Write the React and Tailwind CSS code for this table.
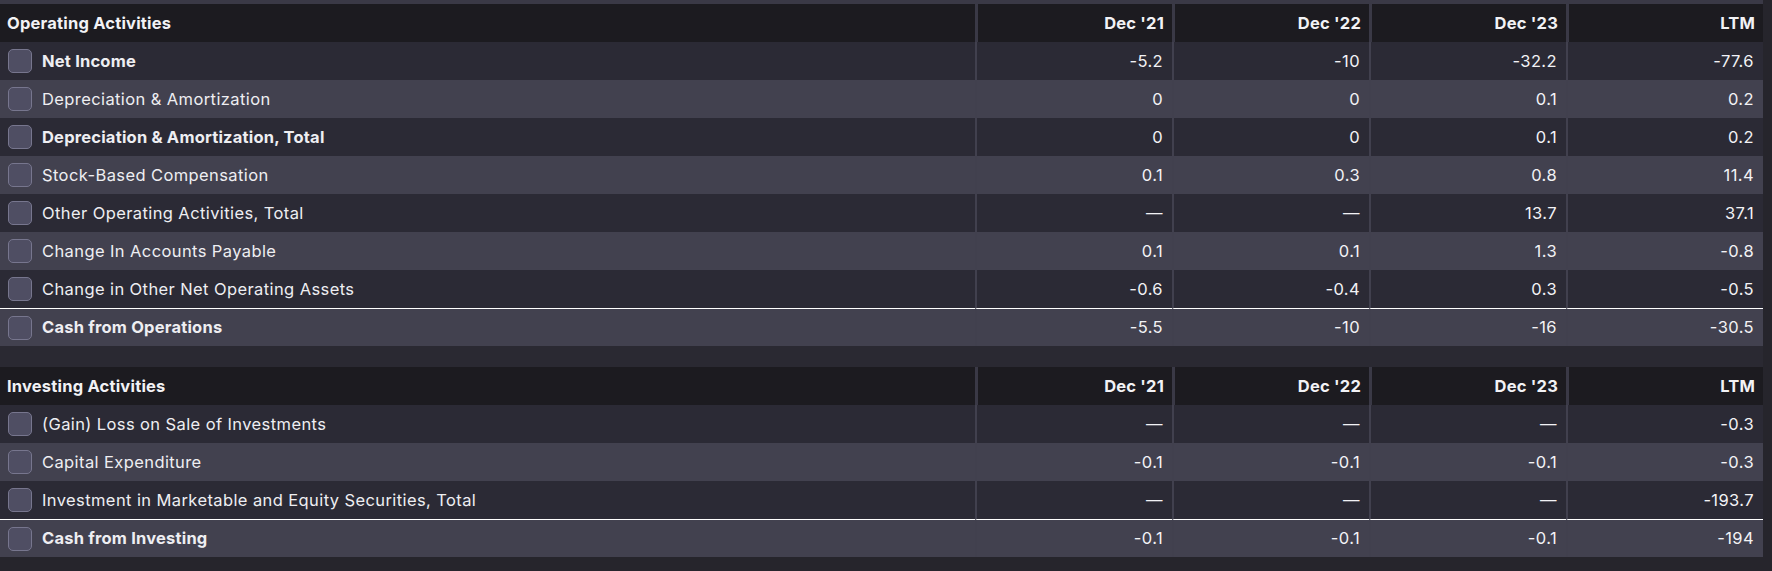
import React from "react";

const sections = [
  {
    title: "Operating Activities",
    rows: [
      { label: "Net Income", bold: true, v: ["-5.2", "-10", "-32.2", "-77.6"] },
      { label: "Depreciation & Amortization", v: ["0", "0", "0.1", "0.2"] },
      { label: "Depreciation & Amortization, Total", bold: true, v: ["0", "0", "0.1", "0.2"] },
      { label: "Stock-Based Compensation", v: ["0.1", "0.3", "0.8", "11.4"] },
      { label: "Other Operating Activities, Total", v: ["—", "—", "13.7", "37.1"] },
      { label: "Change In Accounts Payable", v: ["0.1", "0.1", "1.3", "-0.8"] },
      { label: "Change in Other Net Operating Assets", v: ["-0.6", "-0.4", "0.3", "-0.5"] },
      { label: "Cash from Operations", bold: true, total: true, v: ["-5.5", "-10", "-16", "-30.5"] },
    ],
  },
  {
    title: "Investing Activities",
    rows: [
      { label: "(Gain) Loss on Sale of Investments", v: ["—", "—", "—", "-0.3"] },
      { label: "Capital Expenditure", v: ["-0.1", "-0.1", "-0.1", "-0.3"] },
      { label: "Investment in Marketable and Equity Securities, Total", v: ["—", "—", "—", "-193.7"] },
      { label: "Cash from Investing", bold: true, total: true, v: ["-0.1", "-0.1", "-0.1", "-194"] },
    ],
  },
];

const cols = ["Dec '21", "Dec '22", "Dec '23", "LTM"];

function Section({ s }) {
  return (
    <div className="grid grid-cols-[975px_197px_197px_197px_197px] w-[1763px]">
      <div className="h-[38px] bg-[#1c1b20] flex items-center pl-[7px] font-bold text-[16.5px] tracking-[0.2px] text-[#f2f2f5]">
        {s.title}
      </div>
      {cols.map((c) => (
        <div
          key={c}
          className="h-[38px] bg-[#1c1b20] border-l-[3px] border-[#3a3946] flex items-center justify-end pr-[8px] font-bold text-[16.5px] tracking-[0.2px] text-[#f2f2f5]"
        >
          {c}
        </div>
      ))}
      {s.rows.map((r, i) => {
        const bg = i % 2 === 0 ? "bg-[#2b2a35]" : "bg-[#42414f]";
        const top = r.total ? "border-t border-t-white" : "";
        return (
          <React.Fragment key={r.label}>
            <div className={`h-[38px] ${bg} ${top} flex items-center pl-[8px]`}>
              <div className="w-[24px] h-[24px] rounded-[5px] bg-[#4f4e63] border border-[#77768e] shrink-0" />
              <span
                className={`ml-[10px] text-[16.5px] text-[#eeeef2] ${r.bold ? "font-bold tracking-[0.2px]" : "font-normal tracking-[0.4px]"}`}
              >
                {r.label}
              </span>
            </div>
            {r.v.map((v, j) => (
              <div
                key={j}
                className={`h-[38px] ${bg} ${top} border-l-2 border-l-[#41404e] flex items-center justify-end pr-[9px] text-[16.5px] tracking-[0.4px] text-[#f2f2f5]`}
              >
                {v}
              </div>
            ))}
          </React.Fragment>
        );
      })}
    </div>
  );
}

export default function App() {
  return (
    <div
      className="w-[1772px] h-[571px] bg-[#26252c] overflow-hidden"
      style={{ fontFamily: "Inter, 'Noto Sans', sans-serif" }}
    >
      <div className="h-[4px] w-[1763px] bg-[#3a3946]" />
      <Section s={sections[0]} />
      <div className="h-[21px] w-[1763px] bg-[#2a2932]" />
      <Section s={sections[1]} />
    </div>
  );
}
